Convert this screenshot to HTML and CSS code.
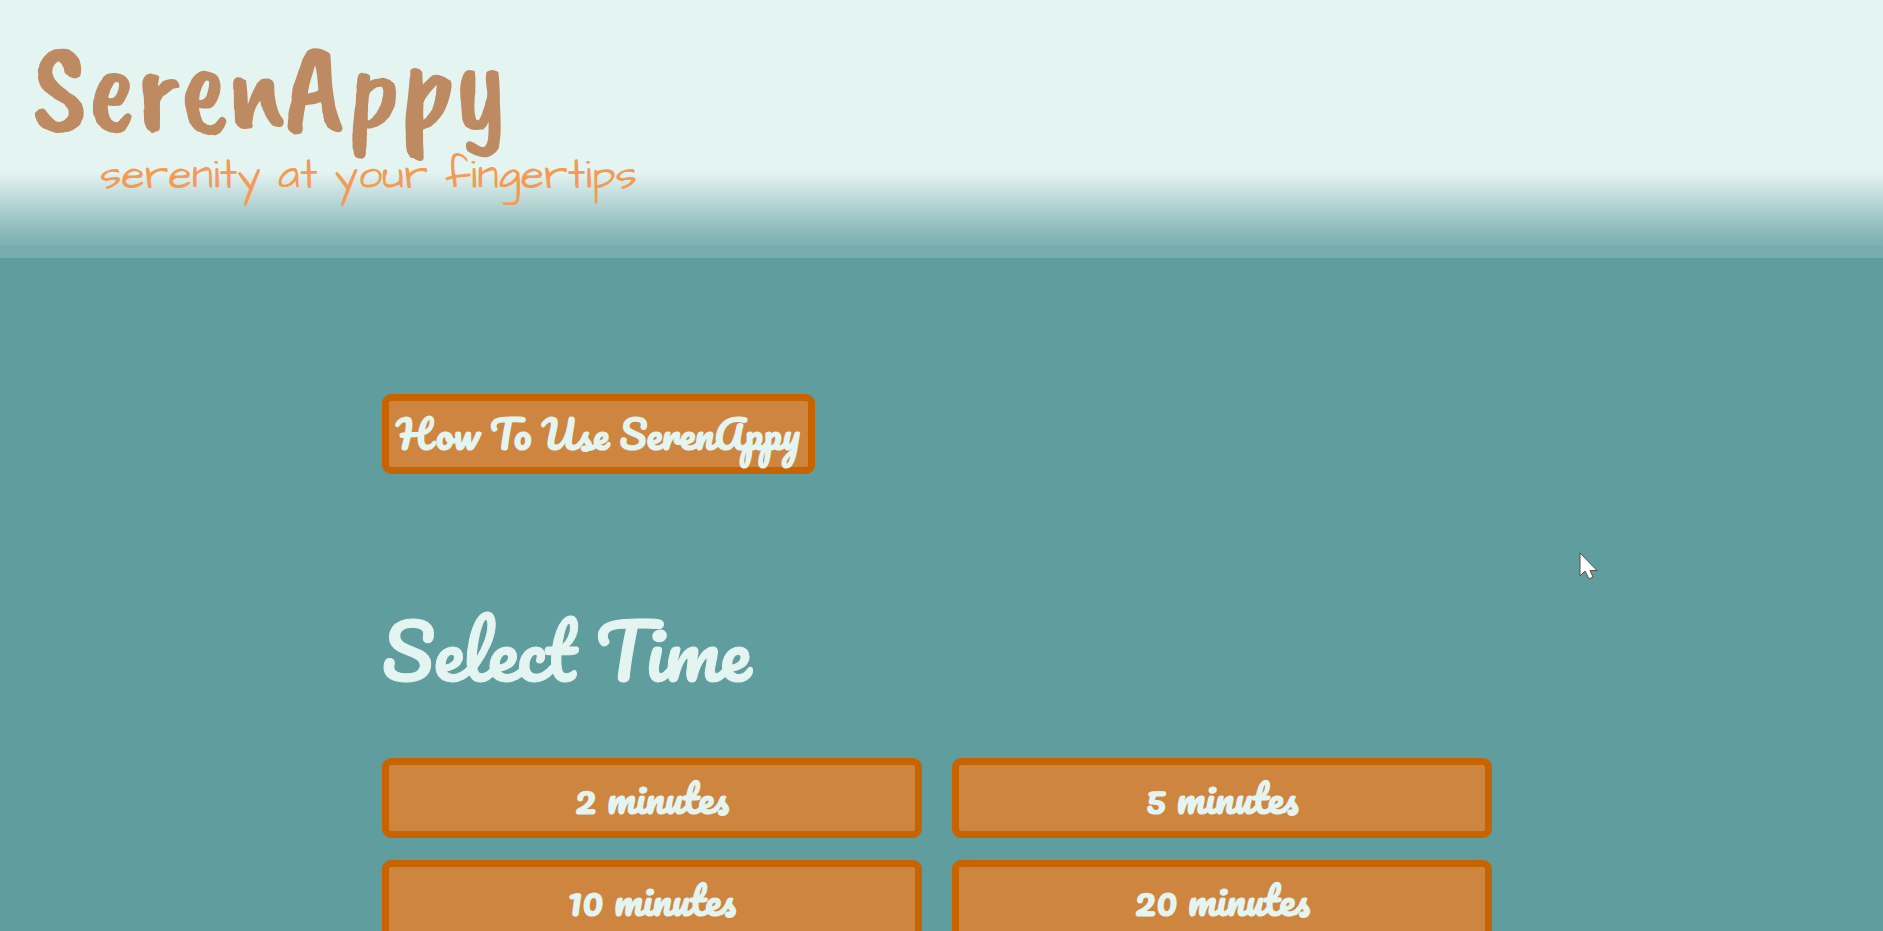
FILE: index.html
```html
<!DOCTYPE html>
<html lang="en">
<head>
<meta charset="utf-8">
<meta name="viewport" content="width=device-width, initial-scale=1">
<title>SerenAppy</title>
<link rel="stylesheet" href="styles.css">
</head>
<body>
<header class="banner">
  <div class="brand">SerenAppy</div>
  <p class="tagline">serenity at your fingertips</p>
</header>
<main class="container">
  <button class="btn btn-help" type="button">How To Use SerenAppy</button>
  <h1 class="heading">Select Time</h1>
  <div class="times">
    <button class="btn" type="button">2 minutes</button>
    <button class="btn" type="button">5 minutes</button>
    <button class="btn" type="button">10 minutes</button>
    <button class="btn" type="button">20 minutes</button>
  </div>
</main>
<svg class="pointer" width="19" height="28" viewBox="0 0 19 28" aria-hidden="true">
  <path d="M1 1V24L6 19L10 27L14 25L11 18.500H18Z" fill="#fff" stroke="#5a4a42" stroke-width="1"/>
</svg>
</body>
</html>
```
FILE: styles.css
```css
* {
  box-sizing: border-box;
}

body {
  margin: 0;
  background: #609d9e;
  color: #e4f4f1;
  font-family: Pacifico, Lato, sans-serif;
}

.banner {
  height: 258px;
  padding: 28px 32px 0;
  background: linear-gradient(#e4f4f1 0, #e4f4f1 172px, #c3dddb 195px, #9fc7c6 218px, #84b4b5 238px, #7eb1b3 246px, #77abae 246px, #77abae 100%);
}

.brand {
  color: #be8a61;
  font-family: "Caveat Brush", Lato, sans-serif;
  font-size: 128px;
  line-height: 116px;
}

.tagline {
  margin: 0;
  padding: 10px 0 0 68px;
  color: #f49a55;
  font-family: "Architects Daughter", "Noto Sans", sans-serif;
  font-size: 43px;
  line-height: 44px;
}

.container {
  width: 60%;
  min-width: 960px;
  margin: 0 auto;
  padding: 136px 14px 0 5px;
}

.btn {
  height: 80px;
  padding: 0 8px;
  border: 7px solid #c86400;
  border-radius: 9px;
  background: #cd853f;
  color: #e4f4f1;
  font-family: inherit;
  font-size: 39px;
  font-weight: 700;
  line-height: 56px;
}

.btn-help {
  display: block;
}

.heading {
  margin: 120px 0 0;
  font-size: 75px;
  font-weight: 400;
  line-height: 112px;
  -webkit-text-stroke: 1px #e4f4f1;
}

.times {
  display: grid;
  grid-template-columns: 1fr 1fr;
  gap: 22px 30px;
  padding-top: 52px;
}

.pointer {
  position: absolute;
  top: 552px;
  left: 1579px;
}
```
